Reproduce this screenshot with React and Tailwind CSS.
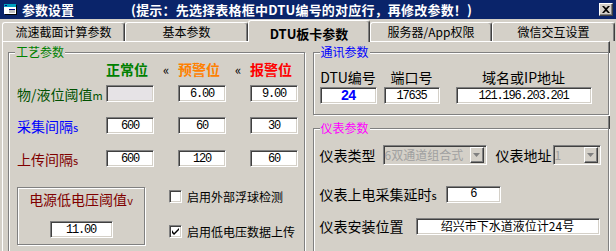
import React from "react";

function TitleIcon() {
  return (
    <svg width="15" height="13" viewBox="0 0 15 13" className="shrink-0">
      <rect x="1" y="1" width="12" height="10" fill="#ffffff" />
      <rect x="1" y="1" width="12" height="3" fill="#00a0c0" />
      <rect x="2" y="2" width="2" height="1" fill="#000080" />
      <rect x="13" y="2" width="1" height="10" fill="#000000" />
      <rect x="2" y="11" width="12" height="1" fill="#000000" />
      <rect x="6" y="6" width="6" height="4" fill="#c0c0c0" />
      <rect x="6" y="6" width="6" height="1" fill="#000080" />
    </svg>
  );
}

function Tab({ children, selected, w }) {
  if (selected) {
    return (
      <div
        className={`relative z-10 -mb-[1px] h-[22px] ${w} bg-[#d4d0c8] border-t border-l border-white border-r border-r-[#404040] rounded-t-[3px] shadow-[inset_-1px_0_0_#808080] flex items-center justify-center pt-[3px] text-[13px] font-bold leading-none`}
      >
        {children}
      </div>
    );
  }
  return (
    <div
      className={`h-[19px] ${w} bg-[#d4d0c8] border-t border-l border-white border-r border-r-[#404040] rounded-t-[3px] shadow-[inset_-1px_0_0_#808080] flex items-center justify-center text-[12px] leading-none`}
    >
      {children}
    </div>
  );
}

function Field({ className, bg = "bg-white", children }) {
  return (
    <div
      className={`h-[17px] ${bg} border border-t-[#808080] border-l-[#808080] border-b-white border-r-white shadow-[inset_1px_1px_0_#404040,inset_-1px_-1px_0_#d4d0c8] flex items-center justify-center text-[12px] leading-none font-['Liberation_Mono',monospace] tracking-[-1.2px] ${className}`}
    >
      {children}
    </div>
  );
}

function Group({ className, legend, legendColor, children }) {
  return (
    <div
      className={`relative border border-[#808080] shadow-[inset_1px_1px_0_#ffffff,1px_1px_0_#ffffff] ${className}`}
    >
      <span
        className={`absolute -top-[8px] left-[6px] px-[1px] bg-[#d4d0c8] text-[12px] leading-[14px] ${legendColor}`}
      >
        {legend}
      </span>
      {children}
    </div>
  );
}

function Combo({ className, text }) {
  return (
    <div
      className={`h-[20px] bg-[#d4d0c8] border border-t-[#808080] border-l-[#808080] border-b-white border-r-white shadow-[inset_1px_1px_0_#404040,inset_-1px_-1px_0_#d4d0c8] flex items-center pl-[1px] pr-[2px] ${className}`}
    >
      <span className="flex-1 text-[12px] leading-[16px] text-[#a0a0a0] whitespace-nowrap">
        {text}
      </span>
      <div className="w-[14px] h-[16px] shrink-0 bg-[#d4d0c8] border border-t-white border-l-white border-b-[#404040] border-r-[#404040] shadow-[inset_-1px_-1px_0_#808080] flex items-center justify-center">
        <svg width="7" height="4" viewBox="0 0 7 4">
          <path d="M0 0h7L3.5 4z" fill="#808080" />
        </svg>
      </div>
    </div>
  );
}

function CheckBox({ checked }) {
  return (
    <div className="w-[13px] h-[13px] bg-white border border-t-[#808080] border-l-[#808080] border-b-white border-r-white shadow-[inset_1px_1px_0_#404040,inset_-1px_-1px_0_#d4d0c8] flex items-center justify-center shrink-0">
      {checked && (
        <svg width="7" height="7" viewBox="0 0 7 7">
          <path d="M0 2v3l2 2 5-5V0L2 5z" fill="#000" />
        </svg>
      )}
    </div>
  );
}

const ROW = "grid grid-cols-[89px_48px_24px_48px_24px_48px] items-center";

export default function App() {
  return (
    <div className="w-[616px] h-[251px] overflow-hidden bg-[#d4d0c8] font-['Noto_Sans_CJK_SC',sans-serif] text-black select-none">
      {/* title bar */}
      <div className="h-[19px] bg-[#0a246a] flex items-center pl-[3px] pr-[3px] text-white">
        <TitleIcon />
        <span className="ml-[4px] text-[13px] font-bold leading-none">参数设置</span>
        <span className="ml-[57px] text-[13px] font-bold leading-none whitespace-nowrap tracking-[0.2px]">
          (提示：先选择表格框中DTU编号的对应行，再修改参数！)
        </span>
        <div className="ml-auto w-[14px] h-[13px] bg-[#d4d0c8] border border-t-white border-l-white border-b-[#404040] border-r-[#404040] shadow-[inset_-1px_-1px_0_#808080] flex items-center justify-center">
          <svg width="8" height="7" viewBox="0 0 8 7">
            <path d="M0 0h2l2 2 2-2h2L5 3.5 8 7H6L4 5 2 7H0l3-3.5z" fill="#000" />
          </svg>
        </div>
      </div>

      {/* tabs */}
      <div className="h-[22px] flex items-end pl-[2px] pr-[1px]">
        <Tab w="w-[123px]">流速截面计算参数</Tab>
        <Tab w="w-[123px]">基本参数</Tab>
        <Tab w="w-[122px]" selected>
          DTU板卡参数
        </Tab>
        <Tab w="w-[122px]">服务器/App权限</Tab>
        <Tab w="w-[123px]">微信交互设置</Tab>
      </div>

      {/* panel */}
      <div className="ml-[2px] mr-[6px] h-[220px] border-t border-l border-white border-r border-r-[#404040] shadow-[inset_-1px_0_0_#808080] flex gap-[8px] pl-[5px]">
        {/* 工艺参数 */}
        <Group
          className="mt-[10px] w-[297px] h-[220px] pl-[8px]"
          legend="工艺参数"
          legendColor="text-[#008000]"
        >
          <div className={`${ROW} h-[16px] mt-[8px] text-[14px] font-bold leading-none`}>
            <span />
            <span className="text-[#008000]">正常位</span>
            <span className="text-center text-[13px] font-normal">«</span>
            <span className="text-[#ff8000]">预警位</span>
            <span className="text-center text-[13px] font-normal">«</span>
            <span className="text-[#ff0000]">报警位</span>
          </div>
          <div className={`${ROW} h-[17px] mt-[8px]`}>
            <span className="text-[14px] leading-none text-[#005000] whitespace-nowrap">
              物/液位阈值<span className="text-[11px]">m</span>
            </span>
            <Field bg="bg-[#e6e3e6]"></Field>
            <span />
            <Field>6.00</Field>
            <span />
            <Field>9.00</Field>
          </div>
          <div className={`${ROW} h-[17px] mt-[15px]`}>
            <span className="text-[14px] leading-none text-[#0000ff] whitespace-nowrap">
              采集间隔<span className="text-[11px]">s</span>
            </span>
            <Field>600</Field>
            <span />
            <Field>60</Field>
            <span />
            <Field>30</Field>
          </div>
          <div className={`${ROW} h-[17px] mt-[16px]`}>
            <span className="text-[14px] leading-none text-[#800000] whitespace-nowrap">
              上传间隔<span className="text-[11px]">s</span>
            </span>
            <Field>600</Field>
            <span />
            <Field>120</Field>
            <span />
            <Field>60</Field>
          </div>
          <div className="flex mt-[20px]">
            <div className="w-[128px] h-[58px] border border-[#808080] shadow-[inset_1px_1px_0_#ffffff,1px_1px_0_#ffffff] flex flex-col items-center">
              <span className="mt-[3px] h-[16px] text-[14px] leading-[16px] text-[#800000] whitespace-nowrap">
                电源低电压阈值<span className="text-[11px]">v</span>
              </span>
              <Field className="mt-[14px] w-[63px]">11.00</Field>
            </div>
            <div className="ml-[24px] flex flex-col">
              <div className="mt-[3px] flex items-center gap-[5px] h-[13px]">
                <CheckBox />
                <span className="text-[12px] leading-none whitespace-nowrap">启用外部浮球检测</span>
              </div>
              <div className="mt-[22px] flex items-center gap-[5px] h-[13px]">
                <CheckBox checked />
                <span className="text-[12px] leading-none whitespace-nowrap">启用低电压数据上传</span>
              </div>
            </div>
          </div>
        </Group>

        {/* right column */}
        <div className="w-[297px] flex flex-col">
          <Group
            className="mt-[10px] h-[66px] pl-[6px] flex"
            legend="通讯参数"
            legendColor="text-[#0000ff]"
          >
            <div className="mt-[16px] flex flex-col items-center w-[57px]">
              <span className="h-[16px] text-[14px] leading-[16px] whitespace-nowrap">DTU编号</span>
              <Field className="mt-[2px] w-[57px] text-[14px] font-bold text-[#0000ff]">24</Field>
            </div>
            <div className="ml-[7px] mt-[16px] flex flex-col items-center w-[56px]">
              <span className="h-[16px] text-[14px] leading-[16px] whitespace-nowrap">端口号</span>
              <Field className="mt-[2px] w-[56px]">17635</Field>
            </div>
            <div className="ml-[16px] mt-[16px] flex flex-col items-center w-[136px]">
              <span className="h-[16px] text-[14px] leading-[16px] whitespace-nowrap">域名或IP地址</span>
              <Field className="mt-[2px] w-[136px]">121.196.203.201</Field>
            </div>
          </Group>

          <Group
            className="mt-[13px] h-[140px] pl-[6px]"
            legend="仪表参数"
            legendColor="text-[#ff00ff]"
          >
            <div className="mt-[16px] flex items-center h-[20px]">
              <span className="text-[14px] leading-none whitespace-nowrap">仪表类型</span>
              <Combo className="ml-[7px] w-[104px]" text="6双通道组合式" />
              <span className="ml-[9px] text-[14px] leading-none whitespace-nowrap">仪表地址</span>
              <Combo className="ml-[1px] w-[48px]" text="1" />
            </div>
            <div className="mt-[21px] flex items-center h-[17px]">
              <span className="text-[14px] leading-none whitespace-nowrap">
                仪表上电采集延时<span className="text-[11px]">s</span>
              </span>
              <Field className="ml-[9px] w-[55px]">6</Field>
            </div>
            <div className="mt-[15px] flex items-center h-[17px]">
              <span className="text-[14px] leading-none whitespace-nowrap">仪表安装位置</span>
              <Field className="ml-[12px] w-[184px] font-['Noto_Sans_CJK_SC',sans-serif] tracking-normal">
                绍兴市下水道液位计24号
              </Field>
            </div>
          </Group>
        </div>
      </div>
    </div>
  );
}
